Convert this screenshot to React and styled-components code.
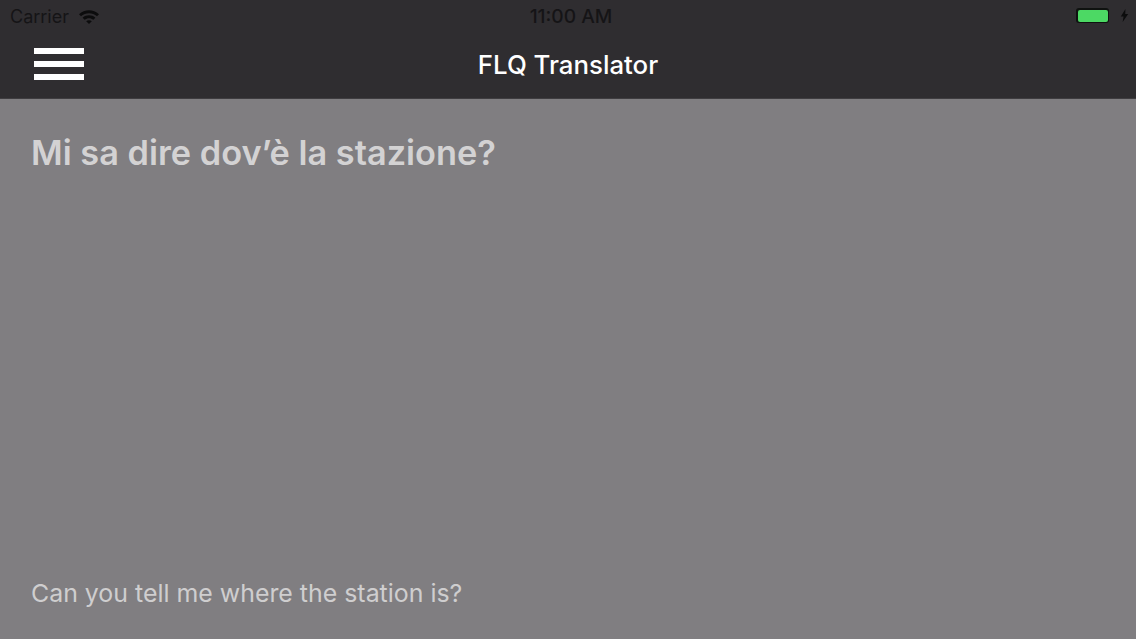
import styled, { createGlobalStyle } from "styled-components";

const GlobalStyle = createGlobalStyle`
  html, body {
    margin: 0;
    padding: 0;
    height: 100%;
    overflow: hidden;
    background: #807e81;
  }
  #root {
    height: 100%;
  }
`;

const App = () => {
  return (
    <>
      <GlobalStyle />
      <Screen>
        <Header>
          <StatusBar>
            <StatusLeft>
              <Carrier>Carrier</Carrier>
              <svg width="22" height="15" viewBox="0 0 22 15">
                <path d="M1 5.2C6.6-.1 15.4-.1 21 5.2l-2 2.1C14.500 3.200 7.500 3.200 3 7.300z" fill="#0c0c0d" />
                <path d="M4.600 8.700c3.600-3.200 9.200-3.200 12.800 0l-2 2.100c-2.600-2.200-6.200-2.200-8.800 0z" fill="#0c0c0d" />
                <path d="M8.200 12.200c1.600-1.300 4-1.300 5.600 0L11 15z" fill="#0c0c0d" />
              </svg>
            </StatusLeft>
            <Clock>11:00 AM</Clock>
            <StatusRight>
              <Battery>
                <BatteryLevel />
              </Battery>
              <svg width="9" height="13" viewBox="0 0 9 14">
                <path d="M5.500 0 0.500 8h3L2.500 14 8.500 5.500h-3.200z" fill="#0c0c0d" />
              </svg>
            </StatusRight>
          </StatusBar>
          <NavBar>
            <MenuButton aria-label="Menu">
              <MenuLine />
              <MenuLine />
              <MenuLine />
            </MenuButton>
            <Title>FLQ Translator</Title>
          </NavBar>
        </Header>
        <Content>
          <Phrase>Mi sa dire dov’è la stazione?</Phrase>
          <Translation>Can you tell me where the station is?</Translation>
        </Content>
      </Screen>
    </>
  );
};

export default App;

const Screen = styled.div`
  display: flex;
  flex-direction: column;
  height: 100%;
  font-family: Inter, "Liberation Sans", sans-serif;
`;

const Header = styled.header`
  flex-shrink: 0;
  height: 99px;
  box-sizing: border-box;
  background: #2f2d30;
  border-bottom: 1px solid #3f3d40;
`;

const StatusBar = styled.div`
  display: grid;
  grid-template-columns: 1fr auto 1fr;
  align-items: center;
  height: 31px;
  padding: 0 7px 0 10px;
`;

const StatusLeft = styled.div`
  display: flex;
  align-items: center;
  gap: 9px;
  margin-top: 1px;
`;

const Carrier = styled.span`
  font-size: 18px;
  color: #0f0f10;
  opacity: 0.8;
`;

const Clock = styled.span`
  margin-left: 3px;
  font-size: 19.200px;
  font-weight: 500;
  color: #0f0f10;
  opacity: 0.8;
`;

const StatusRight = styled.div`
  display: flex;
  align-items: center;
  justify-content: flex-end;
  gap: 11px;
`;

const Battery = styled.div`
  width: 33px;
  height: 15px;
  box-sizing: border-box;
  padding: 1.500px;
  border-radius: 3px;
  background: #0f1210;
`;

const BatteryLevel = styled.div`
  height: 100%;
  border-radius: 2px;
  background: #4cd964;
`;

const NavBar = styled.div`
  position: relative;
  display: flex;
  align-items: center;
  justify-content: center;
  height: 66px;
`;

const MenuButton = styled.button`
  position: absolute;
  left: 34px;
  top: 17px;
  display: flex;
  flex-direction: column;
  gap: 7px;
  width: 50px;
  padding: 0;
  border: 0;
  background: none;
`;

const MenuLine = styled.span`
  display: block;
  height: 6px;
  background: #ffffff;
`;

const Title = styled.h1`
  margin: 0;
  font-size: 25.800px;
  font-weight: 500;
  color: #ffffff;
`;

const Content = styled.main`
  flex: 1;
  display: flex;
  flex-direction: column;
  justify-content: space-between;
  padding: 33px 31px 31px;
  background: #807e81;
`;

const Phrase = styled.p`
  margin: 0;
  font-size: 34.350px;
  font-weight: 600;
  color: #d3d2d3;
`;

const Translation = styled.p`
  margin: 0;
  font-size: 24.900px;
  color: #cfcecf;
`;
